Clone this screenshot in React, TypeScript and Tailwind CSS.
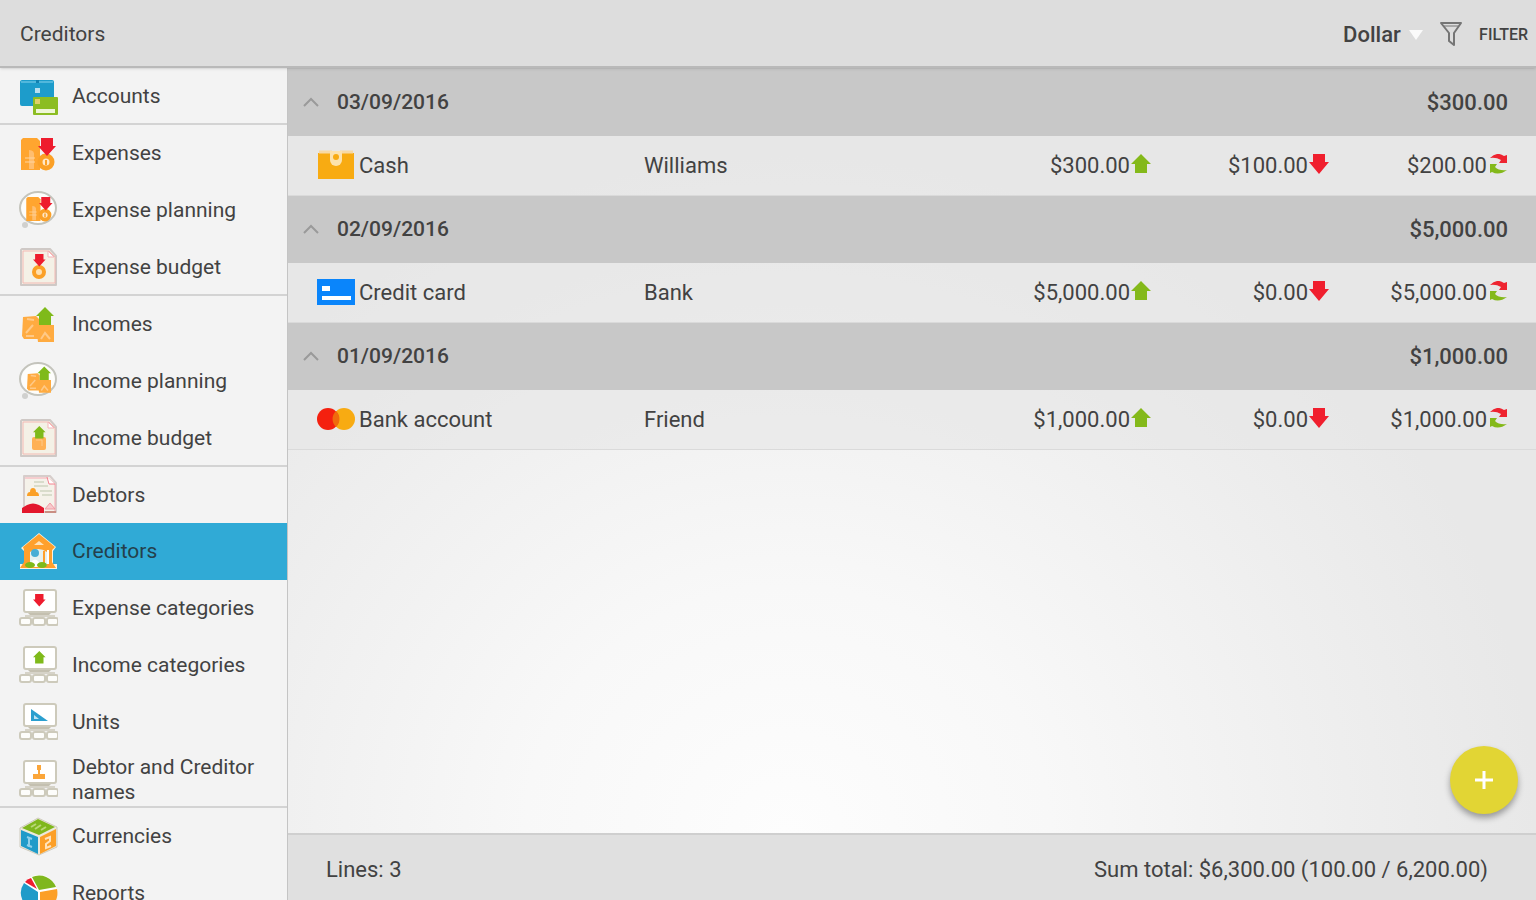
import { useState, Fragment } from "react";
import type { ReactNode } from "react";

// ---------------------------------------------------------------------------
// Types
// ---------------------------------------------------------------------------

interface MenuItem {
  label: string;
  icon: ReactNode;
  divider?: boolean;
  compact?: boolean;
}

interface Group {
  date: string;
  total: string;
  account: string;
  icon: ReactNode;
  name: string;
  amount: string;
  paid: string;
  rest: string;
}

// ---------------------------------------------------------------------------
// Small shapes shared by the icons
// ---------------------------------------------------------------------------

const UP = "M9 0 L18 9 H15 V18 H3 V9 H0 Z";
const DOWN = "M3 0 H15 V8 H18 L9 18 L0 8 H3 Z";

function Icon({ children }: { children: ReactNode }) {
  return (
    <svg viewBox="0 0 40 40" className="h-10 w-10 shrink-0" aria-hidden="true">
      {children}
    </svg>
  );
}

function ExpenseArt() {
  return (
    <>
      <path d="M5 4 H19 L22 7 V36 H3 V6 Z" fill="#ffa52f" />
      <path d="M11 16 q6 0 5 6 v13 h-5 z" fill="#ffc98a" opacity=".7" />
      <path d="M7 24 h10 M7 28 h10" stroke="#ffd5a0" strokeWidth="1" />
      <circle cx="28" cy="28" r="6" fill="#ffe7c8" stroke="#fba026" strokeWidth="5" />
      <path d="M28 26 v5" stroke="#fba026" strokeWidth="2" />
      <path d={DOWN} transform="translate(20 4)" fill="#ee1c2e" />
    </>
  );
}

function IncomeArt() {
  return (
    <>
      <path d="M5 12 L18 11 L21 14 V34 H6 L4 31 Z" fill="#ffab40" />
      <path d="M9 14 l7 1 M15 20 l-7 8 M8 31 h8" stroke="#ffc987" strokeWidth="2" fill="none" />
      <path d="M18 20 H36 V37 H20 Z" fill="#ffab40" />
      <path d="M23 34 l4-6 5 6" stroke="#ffc987" strokeWidth="2" fill="none" />
      <path d={UP} transform="translate(18 2)" fill="#7fba1a" />
    </>
  );
}

function Bubble({ children }: { children: ReactNode }) {
  return (
    <Icon>
      <circle cx="7" cy="34" r="3" fill="#d0d0ce" />
      <ellipse cx="20" cy="17" rx="18" ry="16" fill="#fdfdfb" stroke="#c4c4bc" strokeWidth="2" />
      <g transform="translate(6 3) scale(.75)">{children}</g>
    </Icon>
  );
}

function Sheet({ children }: { children: ReactNode }) {
  return (
    <Icon>
      <path d="M4 1 H32 L38 8 V37 H3 V2 Z" fill="#f3efe4" stroke="#cfc9c6" strokeWidth="2" strokeLinejoin="round" />
      <path d="M5 3 H31 L37 9 V35 H5 Z" fill="#f4f1e6" stroke="#f3b9b4" strokeWidth="1" />
      <path d="M30 3 v6 h6 z" fill="#fff" stroke="#f4b4b8" strokeWidth="1" />
      {children}
    </Icon>
  );
}

function Monitor({ children }: { children: ReactNode }) {
  return (
    <Icon>
      <rect x="6" y="1" width="32" height="22" rx="2" fill="#fff" stroke="#cdcabb" strokeWidth="2" />
      {children}
      <path d="M10 24 H33 L29 28 H14 Z" fill="#c4c0b0" />
      <path d="M7 27 h30" stroke="#d6d3c8" strokeWidth="2" />
      <g fill="#fdfdfb" stroke="#cdcabb" strokeWidth="2">
        <rect x="2" y="29" width="11" height="7" rx="2" />
        <rect x="15" y="29" width="12" height="7" rx="2" />
        <rect x="29" y="29" width="11" height="7" rx="2" />
      </g>
    </Icon>
  );
}

// ---------------------------------------------------------------------------
// Menu icons
// ---------------------------------------------------------------------------

const accountsIcon = (
  <Icon>
    <rect x="2" y="3" width="34" height="26" rx="2" fill="#1d9ccb" />
    <path d="M3 5 h32" stroke="#52b7dc" strokeWidth="2" />
    <path d="M18 3 h3 v3 h-3z" fill="#1280b0" />
    <path d="M17 11 h5 v5 h-5z" fill="#b9dff0" />
    <rect x="15" y="20" width="25" height="18" rx="1" fill="#8cbd22" />
    <rect x="17" y="22" width="5" height="5" fill="#e0cf6a" />
    <rect x="18" y="32" width="19" height="4" fill="#eef6d6" />
  </Icon>
);

const sheetExpenseIcon = (
  <Sheet>
    <circle cx="21" cy="24" r="5" fill="#ffe0b0" stroke="#fba026" strokeWidth="4" />
    <path d={DOWN} transform="translate(15 6) scale(.7)" fill="#ee1c2e" />
  </Sheet>
);

const sheetIncomeIcon = (
  <Sheet>
    <rect x="14" y="18" width="14" height="13" rx="2" fill="#ffb154" />
    <path d="M18 21 h6 v6" stroke="#ffc987" strokeWidth="1" fill="none" />
    <path d={UP} transform="translate(15 7) scale(.7)" fill="#7fba1a" />
  </Sheet>
);

const debtorsIcon = (
  <Icon>
    <path d="M6 1 H32 L38 8 V37 H6 Z" fill="#f5f2ea" stroke="#d6cdcb" strokeWidth="2" strokeLinejoin="round" />
    <path d="M7 3 H30 L37 9 V36" fill="none" stroke="#f7a9b4" strokeWidth="1" />
    <path d="M29 2 l2 7 h6" fill="#fff" stroke="#f4808e" strokeWidth="1" />
    <path d="M16 7 h10 M16 11 h14 M22 16 h12 M24 20 h10" stroke="#d9dccb" strokeWidth="2" />
    <path d="M9 21 q0-4 3-4 q0-4 3-4 q3 0 3 4 q3 0 3 4 z" fill="#fba026" />
    <path d="M27 34 l5-6 5 6 z" fill="#f8c9cc" stroke="#f19ba3" strokeWidth="1" />
    <path d="M4 38 V33 l5-3 q6-3 12 0 l5 3 V38 Z" fill="#e3172c" />
    <path d="M27 37 h11" stroke="#c98e83" strokeWidth="2" />
  </Icon>
);

const creditorsIcon = (
  <Icon>
    <path d="M21 1 L38 15 L35 19 V32 H39 V37 H2 V32 H6 V19 L3 16 Z" fill="#fff2dc" />
    <path d="M21 2 L37 15 L34 18 V30 L38 36 H2 L6 30 V18 L5 15 Z" fill="#ffa02c" />
    <path d="M21 9 l5 4 h-10 z" fill="#ffe2b8" />
    <path d="M12 20 q8-6 17 0 V34 H12 Z" fill="#e6f1ef" />
    <circle cx="17" cy="21" r="4" fill="#46aed5" />
    <path d="M26 19 v12" stroke="#ffa02c" strokeWidth="2" />
    <path d="M30 18 v14" stroke="#fff" strokeWidth="2" />
    <path d="M13 30 q4-5 8 0 v5 h-8z" fill="#fff" />
    <ellipse cx="12" cy="33" rx="5" ry="3" fill="#7fba1a" />
    <ellipse cx="24" cy="33" rx="5" ry="3" fill="#7fba1a" />
  </Icon>
);

const currenciesIcon = (
  <Icon>
    <path d="M20 1 L39 10 V30 L21 38 L2 30 V11 Z" fill="#ece9dc" stroke="#cfcbbd" strokeWidth="1" />
    <path d="M20 2 L37 10 L21 18 L4 11 Z" fill="#7fb71d" />
    <path d="M3 13 L20 20 V37 L3 29 Z" fill="#1f9bc9" />
    <path d="M22 20 L38 12 V29 L22 37 Z" fill="#fc9f27" />
    <path d="M13 10 l5-3 M17 12 l6-4 M23 13 l5-3" stroke="#b9d777" strokeWidth="2" />
    <path d="M11 20 v10 M9 20 l5 2 M9 28 l5 2" stroke="#8fd0ea" strokeWidth="2" />
    <path d="M27 22 l5-2 v4 l-4 3 v4 l5-2" stroke="#ffe3bb" strokeWidth="2" fill="none" />
  </Icon>
);

const reportsIcon = (
  <Icon>
    <circle cx="21" cy="19" r="18" fill="#fff" />
    <path d="M20 18 L6 9 A18 18 0 0 0 20 37 Z" fill="#1f9bc9" />
    <path d="M19 15 L7 8 Q9 5 13 4 Z" fill="#ee1c2e" />
    <path d="M21 16 L14 3 A18 18 0 0 1 38 13 Z" fill="#7fb71d" />
    <path d="M22 18 L39 15 A18 18 0 0 1 22 37 Z" fill="#fc9f27" />
  </Icon>
);

const MENU: MenuItem[] = [
  { label: "Accounts", icon: accountsIcon, divider: true },
  { label: "Expenses", icon: <Icon><ExpenseArt /></Icon> },
  { label: "Expense planning", icon: <Bubble><ExpenseArt /></Bubble> },
  { label: "Expense budget", icon: sheetExpenseIcon, divider: true },
  { label: "Incomes", icon: <Icon><IncomeArt /></Icon> },
  { label: "Income planning", icon: <Bubble><IncomeArt /></Bubble> },
  { label: "Income budget", icon: sheetIncomeIcon, divider: true },
  { label: "Debtors", icon: debtorsIcon, compact: true },
  { label: "Creditors", icon: creditorsIcon },
  {
    label: "Expense categories",
    icon: <Monitor><path d={DOWN} transform="translate(15 5) scale(.7)" fill="#ee1c2e" /></Monitor>,
  },
  {
    label: "Income categories",
    icon: <Monitor><path d={UP} transform="translate(15 5) scale(.7)" fill="#7fba1a" /></Monitor>,
  },
  {
    label: "Units",
    icon: (
      <Monitor>
        <path d="M13 6 L30 18 H13 Z" fill="#2a9fcf" />
        <path d="M16 12 L21 16 H16 Z" fill="#bfe3f2" />
      </Monitor>
    ),
  },
  {
    label: "Debtor and Creditor names",
    icon: (
      <Monitor>
        <path d="M19 5 h4 v5 h-1 v4 h5 v5 h-12 v-5 h5 v-4 h-1 z" fill="#fba63a" />
      </Monitor>
    ),
    divider: true,
  },
  { label: "Currencies", icon: currenciesIcon },
  { label: "Reports", icon: reportsIcon },
];

// ---------------------------------------------------------------------------
// List data
// ---------------------------------------------------------------------------

const GROUPS: Group[] = [
  {
    date: "03/09/2016",
    total: "$300.00",
    account: "Cash",
    icon: (
      <Icon>
        <path d="M2 8 H38 V34 H2 Z" fill="#f8ab12" />
        <path d="M3 7 h13 M24 7 h13" stroke="#f7d9a4" strokeWidth="3" />
        <path d="M14 6 H26 V15 a6 6 0 0 1 -12 0 Z" fill="#fce2ad" />
        <circle cx="20" cy="12" r="3" fill="#f8ab12" />
      </Icon>
    ),
    name: "Williams",
    amount: "$300.00",
    paid: "$100.00",
    rest: "$200.00",
  },
  {
    date: "02/09/2016",
    total: "$5,000.00",
    account: "Credit card",
    icon: (
      <Icon>
        <rect x="1" y="7" width="38" height="26" fill="#0a85fb" />
        <rect x="6" y="14" width="8" height="5" fill="#fff" />
        <rect x="6" y="24" width="29" height="4" fill="#fff" />
      </Icon>
    ),
    name: "Bank",
    amount: "$5,000.00",
    paid: "$0.00",
    rest: "$5,000.00",
  },
  {
    date: "01/09/2016",
    total: "$1,000.00",
    account: "Bank account",
    icon: (
      <Icon>
        <circle cx="28" cy="20" r="11" fill="#f8ab12" />
        <circle cx="12" cy="20" r="11" fill="#f4200f" />
        <path d="M20 12 a11 11 0 0 1 0 16 a11 11 0 0 1 0 -16" fill="#f06a0c" />
      </Icon>
    ),
    name: "Friend",
    amount: "$1,000.00",
    paid: "$0.00",
    rest: "$1,000.00",
  },
];

function Amount({ value, children }: { value: string; children: ReactNode }) {
  return (
    <span className="flex items-center justify-end gap-px">
      {value}
      <svg viewBox="0 0 20 20" className="mb-0.5 h-5 w-5" aria-hidden="true">
        {children}
      </svg>
    </span>
  );
}

// ---------------------------------------------------------------------------
// Component
// ---------------------------------------------------------------------------

export default function App() {
  const [active, setActive] = useState("Creditors");
  const [closed, setClosed] = useState<string[]>([]);

  const toggle = (date: string) => {
    setClosed((prev) => (prev.includes(date) ? prev.filter((d) => d !== date) : [...prev, date]));
  };

  return (
    <div className="flex h-screen flex-col overflow-hidden bg-[#f3f3f3] font-['Roboto',sans-serif] text-[22px] leading-[25px] text-[#424242]">
      {/* Top bar */}
      <header className="z-10 flex h-[68px] shrink-0 items-center justify-between border-b-2 border-[#b9b9b9] bg-[#dddddd] pt-0.5 pr-2 pl-5 shadow-sm">
        <h1 className="text-[21px]">Creditors</h1>
        <div className="flex items-center">
          <div className="relative">
            <select
              aria-label="Currency"
              defaultValue="Dollar"
              className="w-20 appearance-none bg-transparent font-medium outline-none"
            >
              <option>Dollar</option>
            </select>
            <svg viewBox="0 0 14 10" className="pointer-events-none absolute top-2 right-0 h-[10px] w-[14px]" aria-hidden="true">
              <path d="M0 0 H14 L7 10 Z" fill="#fafafa" />
            </svg>
          </div>
          <button className="ml-4 flex items-center gap-4 text-[16px] font-medium">
            <svg viewBox="0 0 24 26" className="h-[26px] w-6" fill="none" stroke="#757575" aria-hidden="true">
              <path d="M2 2 H22 L15 12 V24 L10 20 V12 Z" strokeWidth="2" strokeLinejoin="round" />
              <path d="M5 5 H19" strokeWidth="1" />
            </svg>
            FILTER
          </button>
        </div>
      </header>

      <div className="flex min-h-0 flex-1">
        {/* Side menu */}
        <nav className="w-72 shrink-0 overflow-hidden border-r border-[#c4c4c4] bg-[#f3f3f3] text-[21px]">
          {MENU.map((item) => (
            <button
              key={item.label}
              onClick={() => setActive(item.label)}
              className={`flex w-full items-center gap-[14px] pl-[18px] text-left
                ${item.compact ? "h-14" : "h-[57px]"}
                ${item.divider ? "border-b-2 border-[#d3d3d3] pt-0.5" : ""}
                ${active === item.label ? "bg-[#30aad6] text-[#24404b]" : ""}`}
            >
              {item.icon}
              <span>{item.label}</span>
            </button>
          ))}
        </nav>

        {/* List */}
        <main className="relative flex min-w-0 flex-1 flex-col bg-[radial-gradient(ellipse_60%_85%_at_40%_92%,#fdfdfd_0%,#f8f8f8_35%,#eeeeee_75%,#e8e8e8_100%)]">
          <div className="min-h-0 flex-1 overflow-hidden">
            <table className="w-full table-fixed border-collapse">
              <colgroup>
                <col className="w-[356px]" />
                <col />
                <col className="w-[178px]" />
                <col className="w-[178px]" />
                <col className="w-[207px]" />
              </colgroup>
              <tbody>
                {GROUPS.map((g) => (
                  <Fragment key={g.date}>
                    <tr className="h-[68px] bg-[#c8c8c8]">
                      <th colSpan={4} className="p-0 text-left text-[21px] font-medium">
                        <button onClick={() => toggle(g.date)} className="flex items-center gap-[18px] pl-[15px]">
                          <svg viewBox="0 0 16 10" className="h-[10px] w-4" fill="none" stroke="#9a9a9a" aria-hidden="true">
                            <path d="M1 9 L8 2 L15 9" strokeWidth="2" />
                          </svg>
                          {g.date}
                        </button>
                      </th>
                      <td className="p-0 pr-7 text-right font-medium">{g.total}</td>
                    </tr>
                    {!closed.includes(g.date) && (
                      <tr className="h-[59px] border-b border-[#dadada] bg-[#e6e6e6]/60">
                        <td className="p-0 pl-7">
                          <span className="flex items-center gap-[3px]">
                            {g.icon}
                            {g.account}
                          </span>
                        </td>
                        <td className="p-0">{g.name}</td>
                        <td className="p-0">
                          <Amount value={g.amount}>
                            <path d="M10 0 L20 10 H16 V19 H4 V10 H0 Z" fill="#84b91a" />
                          </Amount>
                        </td>
                        <td className="p-0">
                          <Amount value={g.paid}>
                            <path d="M4 0 H16 V8 H20 L10 20 L0 8 H4 Z" fill="#f01f2e" />
                          </Amount>
                        </td>
                        <td className="p-0 pr-7">
                          <Amount value={g.rest}>
                            <path d="M2 4 Q9 -3 16 2 L19 1 V9 H11 L13 6 Q8 3 2 4 Z" fill="#ee2430" />
                            <path d="M19 16 Q11 22 4 18 L2 19 V10 H9 L7 13 Q11 17 19 16 Z" fill="#84b91a" />
                          </Amount>
                        </td>
                      </tr>
                    )}
                  </Fragment>
                ))}
              </tbody>
            </table>
          </div>

          {/* Totals */}
          <footer className="flex h-[67px] shrink-0 items-center justify-between border-t-2 border-[#cfcfcf] bg-[#e0e0e0] pt-1 pr-12 pl-[38px]">
            <span>Lines: 3</span>
            <span>Sum total: $6,300.00 (100.00 / 6,200.00)</span>
          </footer>

          <button
            aria-label="Add creditor"
            className="absolute right-[18px] bottom-[86px] flex h-[68px] w-[68px] items-center justify-center rounded-full bg-[#e2d534] shadow-[0_4px_6px_rgba(0,0,0,0.35)]"
          >
            <svg viewBox="0 0 18 18" className="h-[18px] w-[18px]" stroke="#fff" strokeWidth="3" aria-hidden="true">
              <path d="M9 0 V18 M0 9 H18" />
            </svg>
          </button>
        </main>
      </div>
    </div>
  );
}
